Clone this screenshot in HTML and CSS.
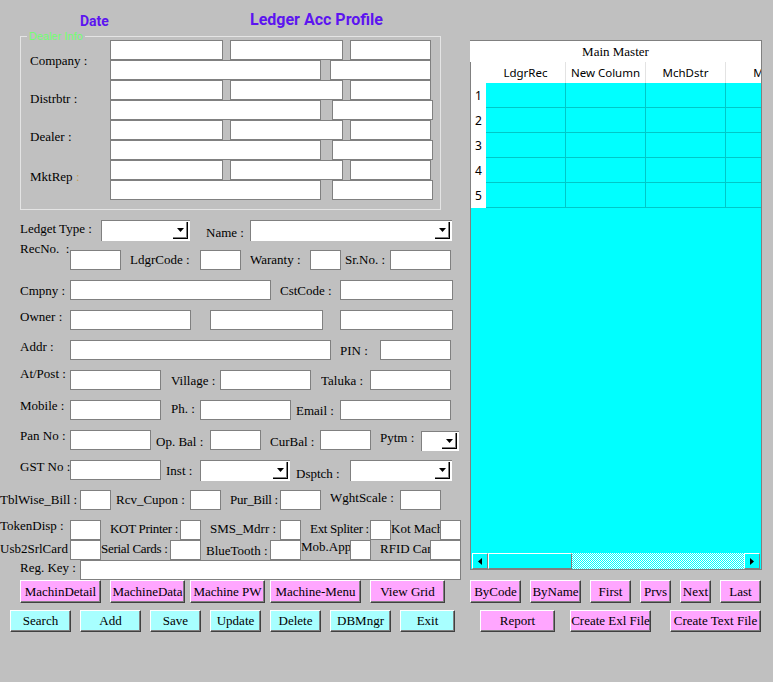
FILE: index.html
```html
<!DOCTYPE html>
<html>
<head>
<meta charset="utf-8">
<title>Ledger Acc Profile</title>
<link rel="stylesheet" href="styles.css">
</head>
<body>
<div class="top">
  <div class="left">
    <div class="hdr"><span class="date">Date</span><span class="ttl">Ledger Acc Profile</span></div>

    <div class="frame">
      <span class="legend">Dealer Info</span>
      <div class="grp">
        <span class="lb flb mt13">Company :</span>
        <div class="stack">
          <div class="line"><input class="tb w113"><input class="tb w113 ml7"><input class="tb w81 ml7"></div>
          <div class="line"><input class="tb w211"><input class="tb w101 ml9"></div>
        </div>
      </div>
      <div class="grp">
        <span class="lb flb mt11">Distrbtr :</span>
        <div class="stack">
          <div class="line"><input class="tb w113"><input class="tb w113 ml7"><input class="tb w81 ml7"></div>
          <div class="line"><input class="tb w211"><input class="tb w101 ml11"></div>
        </div>
      </div>
      <div class="grp">
        <span class="lb flb mt9">Dealer :</span>
        <div class="stack">
          <div class="line"><input class="tb w113"><input class="tb w113 ml7"><input class="tb w81 ml7"></div>
          <div class="line"><input class="tb w211"><input class="tb w101 ml11"></div>
        </div>
      </div>
      <div class="grp">
        <span class="lb flb mt9">MktRep <span class="colon">:</span></span>
        <div class="stack">
          <div class="line"><input class="tb w113"><input class="tb w113 ml7"><input class="tb w81 ml7"></div>
          <div class="line"><input class="tb w211"><input class="tb w101 ml11"></div>
        </div>
      </div>
    </div>

    <div class="row mt10">
      <span class="lb ml20 w81 mt1">Ledget Type :</span>
      <div class="combo w89"><span class="dd"><svg width="7" height="4" viewBox="0 0 7 4"><polygon points="0,0 7,0 3.5,4"/></svg></span></div>
      <span class="lb ml16 w44 mt5">Name :</span>
      <div class="combo w202"><span class="dd"><svg width="7" height="4" viewBox="0 0 7 4"><polygon points="0,0 7,0 3.5,4"/></svg></span></div>
    </div>

    <div class="row">
      <span class="lb ml20 w50 mtn9">RecNo.&nbsp; :</span>
      <input class="tb w51">
      <span class="lb ml9 w70 mt2">LdgrCode :</span>
      <input class="tb w41">
      <span class="lb ml9 w60 mt2">Waranty :</span>
      <input class="tb w31">
      <span class="lb ml4 w45 mt2">Sr.No. :</span>
      <input class="tb w61">
    </div>

    <div class="row">
      <span class="lb ml20 w50 mt3">Cmpny :</span>
      <input class="tb w201">
      <span class="lb ml9 w60 mt3">CstCode :</span>
      <input class="tb w113">
    </div>

    <div class="row">
      <span class="lb ml20 w50 mtn1">Owner :</span>
      <input class="tb w121">
      <input class="tb w113 ml19">
      <input class="tb w113 ml17">
    </div>

    <div class="row">
      <span class="lb ml20 w50 mtn1">Addr :</span>
      <input class="tb w261">
      <span class="lb ml9 w40 mt3">PIN :</span>
      <input class="tb w71">
    </div>

    <div class="row">
      <span class="lb ml20 w50 mtn4">At/Post :</span>
      <input class="tb w91">
      <span class="lb ml10 w49 mt3">Village :</span>
      <input class="tb w91">
      <span class="lb ml10 w49 mt3">Taluka :</span>
      <input class="tb w81">
    </div>

    <div class="row">
      <span class="lb ml20 w50 mtn2">Mobile :</span>
      <input class="tb w91">
      <span class="lb ml10 w29 mt1">Ph. :</span>
      <input class="tb w91">
      <span class="lb ml5 w44 mt3">Email :</span>
      <input class="tb w111">
    </div>

    <div class="row">
      <span class="lb ml20 w50 mtn2">Pan No :</span>
      <input class="tb w81">
      <span class="lb ml5 w54 mt4">Op. Bal :</span>
      <input class="tb w51">
      <span class="lb ml9 w50 mt4">CurBal :</span>
      <input class="tb w51">
      <span class="lb ml9 w41 mt0">Pytm :</span>
      <div class="combo w38 h20 mt1"><span class="dd dds"><svg width="7" height="4" viewBox="0 0 7 4"><polygon points="0,0 7,0 3.5,4"/></svg></span></div>
    </div>

    <div class="row">
      <span class="lb ml20 w50 mtn1">GST No :</span>
      <input class="tb w91">
      <span class="lb ml5 w34 mt3">Inst :</span>
      <div class="combo w90"><span class="dd"><svg width="7" height="4" viewBox="0 0 7 4"><polygon points="0,0 7,0 3.5,4"/></svg></span></div>
      <span class="lb ml6 w54 mt6">Dsptch :</span>
      <div class="combo w102"><span class="dd"><svg width="7" height="4" viewBox="0 0 7 4"><polygon points="0,0 7,0 3.5,4"/></svg></span></div>
    </div>

    <div class="row">
      <span class="lb w80 mt2">TblWise_Bill :</span>
      <input class="tb w31">
      <span class="lb ml5 w74 mt2">Rcv_Cupon :</span>
      <input class="tb w31">
      <span class="lb ml9 w50 mt2 tight">Pur_Bill :</span>
      <input class="tb w41">
      <span class="lb ml9 w70 mt0">WghtScale :</span>
      <input class="tb w41">
    </div>

    <div class="row h20">
      <span class="lb w70 mtn2">TokenDisp :</span>
      <input class="tb w31">
      <span class="lb ml9 w70 mt1 tight">KOT Printer :</span>
      <input class="tb w21">
      <span class="lb ml9 w70 mt1">SMS_Mdrr :</span>
      <input class="tb w21">
      <span class="lb ml9 w60 mt1 tight">Ext Spliter :</span>
      <input class="tb w21">
      <span class="lb w49 mt1">Kot Machine :</span>
      <input class="tb w21">
    </div>

    <div class="row h20">
      <span class="lb w70 mt1">Usb2SrlCard</span>
      <input class="tb w31">
      <span class="lb w69 mt1 tight">Serial Cards :</span>
      <input class="tb w31">
      <span class="lb ml5 w64 mt3">BlueTooth :</span>
      <input class="tb w31">
      <span class="lb w49 mtn1">Mob.App :</span>
      <input class="tb w21">
      <span class="lb ml9 w50 mt1">RFID Card :</span>
      <input class="tb w31">
    </div>

    <div class="row h20">
      <span class="lb ml20 w60 mt0">Reg. Key :</span>
      <input class="tb w381">
    </div>
  </div>

  <div class="grid">
    <div class="gtitle">Main Master</div>
    <div class="gbody">
      <div class="ghead">
        <span class="rn"></span>
        <span class="hc">LdgrRec</span>
        <span class="hc">New Column</span>
        <span class="hc">MchDstr</span>
        <span class="hc">Mob</span>
      </div>
      <div class="grow"><span class="rn">1</span><span class="cell"></span><span class="cell"></span><span class="cell"></span><span class="cell"></span></div>
      <div class="grow"><span class="rn">2</span><span class="cell"></span><span class="cell"></span><span class="cell"></span><span class="cell"></span></div>
      <div class="grow"><span class="rn">3</span><span class="cell"></span><span class="cell"></span><span class="cell"></span><span class="cell"></span></div>
      <div class="grow"><span class="rn">4</span><span class="cell"></span><span class="cell"></span><span class="cell"></span><span class="cell"></span></div>
      <div class="grow"><span class="rn">5</span><span class="cell"></span><span class="cell"></span><span class="cell"></span><span class="cell"></span></div>
      <div class="gfill"></div>
      <div class="hscroll">
        <span class="sbtn"><svg width="4" height="7" viewBox="0 0 4 7"><polygon points="4,0 4,7 0,3.5"/></svg></span>
        <span class="thumb"></span>
        <span class="track"></span>
        <span class="sbtn"><svg width="4" height="7" viewBox="0 0 4 7"><polygon points="0,0 0,7 4,3.5"/></svg></span>
      </div>
    </div>
  </div>
</div>

<div class="btnrow">
  <button class="btn pink ml20 w81">MachinDetail</button>
  <button class="btn pink ml9 w75">MachineData</button>
  <button class="btn pink ml5 w75">Machine PW</button>
  <button class="btn pink ml5 w91">Machine-Menu</button>
  <button class="btn pink ml9 w75">View Grid</button>
  <button class="btn pink ml25 w51">ByCode</button>
  <button class="btn pink ml9 w51">ByName</button>
  <button class="btn pink ml9 w41">First</button>
  <button class="btn pink ml9 w31">Prvs</button>
  <button class="btn pink ml9 w31">Next</button>
  <button class="btn pink ml9 w41">Last</button>
</div>
<div class="btnrow r2">
  <button class="btn cyan ml10 w61">Search</button>
  <button class="btn cyan ml9 w61">Add</button>
  <button class="btn cyan ml9 w51">Save</button>
  <button class="btn cyan ml9 w51">Update</button>
  <button class="btn cyan ml9 w51">Delete</button>
  <button class="btn cyan ml9 w61">DBMngr</button>
  <button class="btn cyan ml9 w55">Exit</button>
  <button class="btn pink ml25 w75">Report</button>
  <button class="btn pink ml15 w81">Create Exl File</button>
  <button class="btn pink ml19 w91">Create Text File</button>
</div>
</body>
</html>
```

FILE: styles.css
```css
body {
  margin: 0;
  width: 773px;
  height: 682px;
  overflow: hidden;
  background: #c0c0c0;
  color: #000;
  font-family: "Liberation Serif", "Times New Roman", serif;
  font-size: 13px;
}

.top {
  display: flex;
  align-items: flex-start;
  height: 580px;
}

.left {
  flex: none;
  width: 470px;
}

/* header */
.hdr {
  display: flex;
  align-items: flex-start;
  height: 36px;
  color: #5c14f0;
  font-family: Roboto, "Liberation Sans", sans-serif;
  font-weight: bold;
  line-height: 20px;
}
.date {
  margin-left: 80px;
  width: 170px;
  margin-top: 11px;
  font-size: 14px;
}
.ttl {
  margin-top: 10px;
  font-size: 16px;
}

/* dealer info frame */
.frame {
  position: relative;
  box-sizing: border-box;
  margin-left: 20px;
  width: 421px;
  height: 174px;
  border: 1px solid #e4e4e4;
  padding-top: 3px;
}
.legend {
  position: absolute;
  left: 6px;
  top: -7px;
  padding: 0 2px;
  background: #c0c0c0;
  color: #70ff70;
  font-family: "Liberation Sans", Arial, sans-serif;
  font-size: 11px;
  line-height: 12px;
}
.grp {
  display: flex;
  align-items: flex-start;
  height: 40px;
}
.flb {
  margin-left: 9px;
  width: 80px;
}
.stack {
  display: flex;
  flex-direction: column;
}
.line {
  display: flex;
}
.colon {
  color: #c8a050;
}

/* rows */
.row {
  display: flex;
  align-items: flex-start;
  height: 30px;
}
.row.h20 {
  height: 20px;
}

.lb {
  flex: none;
  display: block;
  line-height: 15px;
  white-space: nowrap;
  overflow: hidden;
}
.tight {
  letter-spacing: -0.3px;
}

.tb {
  flex: none;
  display: block;
  box-sizing: border-box;
  height: 20px;
  margin: 0;
  padding: 0;
  border: 1px solid #808080;
  border-radius: 0;
  background: #fff;
  font: inherit;
  outline: none;
}

.combo {
  flex: none;
  box-sizing: border-box;
  height: 21px;
  background: #fff;
  border-top: 1px solid #808080;
  border-left: 1px solid #808080;
  display: flex;
  justify-content: flex-end;
  align-items: flex-start;
  padding: 1px 2px 0 0;
}
.combo.h20 {
  height: 20px;
}
.dd {
  width: 15px;
  height: 17px;
  background: #fff;
  box-shadow: inset -1px -1px #000, inset -2px -2px #808080;
  display: flex;
  align-items: center;
  justify-content: center;
}
.dd svg {
  margin: -1px 0 0 -1px;
}
.dds {
  height: 16px;
}

/* grid */
.grid {
  flex: none;
  box-sizing: border-box;
  width: 292px;
  height: 530px;
  margin-top: 40px;
  border-top: 1px solid #808080;
  border-right: 1px solid #808080;
  display: flex;
  flex-direction: column;
  font-family: "Noto Sans", "Open Sans", sans-serif;
}
.gtitle {
  flex: none;
  height: 21px;
  line-height: 21px;
  background: #fff;
  text-align: center;
  font-family: "Liberation Serif", serif;
  font-size: 13px;
}
.gbody {
  flex: 1;
  display: flex;
  flex-direction: column;
  background: #00ffff;
  border-left: 1px solid #808080;
  border-bottom: 1px solid #808080;
  overflow: hidden;
}
.ghead {
  flex: none;
  display: flex;
  height: 21px;
  background: #fff;
}
.grow {
  flex: none;
  display: flex;
  height: 25px;
}
.rn {
  flex: none;
  box-sizing: border-box;
  width: 15px;
  padding-left: 4px;
  background: #fff;
  font-size: 12px;
  line-height: 25px;
}
.hc {
  flex: none;
  box-sizing: border-box;
  width: 80px;
  border-right: 1px solid #e3e3e3;
  text-align: center;
  white-space: nowrap;
  font-size: 11.5px;
  line-height: 21px;
}
.cell {
  flex: none;
  box-sizing: border-box;
  width: 80px;
  border-right: 1px solid #00c8c8;
  border-bottom: 1px solid #00c8c8;
}
.gfill {
  flex: 1;
}
.hscroll {
  flex: none;
  display: flex;
  height: 16px;
  margin: 0 1px 0 1px;
}
.sbtn, .thumb {
  flex: none;
  box-sizing: border-box;
  background: #00ffff;
  border: 1px solid;
  border-color: #fff #808080 #808080 #fff;
}
.sbtn {
  width: 16px;
  display: flex;
  align-items: center;
  justify-content: center;
}
.thumb {
  width: 84px;
}
.track {
  flex: 1;
  background: repeating-conic-gradient(#00ffff 0 25%, #ffffff 0 50%) 0 0 / 2px 2px;
}

/* buttons */
.btnrow {
  display: flex;
  height: 23px;
}
.btnrow.r2 {
  height: 22px;
  margin-top: 7px;
}
.btn {
  flex: none;
  box-sizing: border-box;
  height: 100%;
  margin: 0;
  padding: 0;
  font: inherit;
  color: #000;
  border: 1px solid;
  border-color: #fff #404040 #404040 #fff;
  border-radius: 0;
  box-shadow: inset -1px -1px #808080;
  text-align: center;
  white-space: nowrap;
  overflow: hidden;
}
.pink { background: #ffa6ff; }
.cyan { background: #a8ffff; }

/* spacing utilities */
.ml4 { margin-left: 4px; }
.ml5 { margin-left: 5px; }
.ml6 { margin-left: 6px; }
.ml7 { margin-left: 7px; }
.ml9 { margin-left: 9px; }
.ml10 { margin-left: 10px; }
.ml11 { margin-left: 11px; }
.ml15 { margin-left: 15px; }
.ml16 { margin-left: 16px; }
.ml17 { margin-left: 17px; }
.ml19 { margin-left: 19px; }
.ml20 { margin-left: 20px; }
.ml25 { margin-left: 25px; }

.mtn9 { margin-top: -9px; }
.mtn4 { margin-top: -4px; }
.mtn2 { margin-top: -2px; }
.mtn1 { margin-top: -1px; }
.mt0 { margin-top: 0; }
.mt1 { margin-top: 1px; }
.mt2 { margin-top: 2px; }
.mt3 { margin-top: 3px; }
.mt4 { margin-top: 4px; }
.mt5 { margin-top: 5px; }
.mt6 { margin-top: 6px; }
.mt9 { margin-top: 9px; }
.mt10 { margin-top: 10px; }
.mt11 { margin-top: 11px; }
.mt13 { margin-top: 13px; }

/* width utilities */
.w21 { width: 21px; }
.w29 { width: 29px; }
.w31 { width: 31px; }
.w34 { width: 34px; }
.w38 { width: 38px; }
.w40 { width: 40px; }
.w41 { width: 41px; }
.w44 { width: 44px; }
.w45 { width: 45px; }
.w49 { width: 49px; }
.w50 { width: 50px; }
.w51 { width: 51px; }
.w54 { width: 54px; }
.w55 { width: 55px; }
.w60 { width: 60px; }
.w61 { width: 61px; }
.w64 { width: 64px; }
.w69 { width: 69px; }
.w70 { width: 70px; }
.w71 { width: 71px; }
.w74 { width: 74px; }
.w75 { width: 75px; }
.w80 { width: 80px; }
.w81 { width: 81px; }
.w89 { width: 89px; }
.w90 { width: 90px; }
.w91 { width: 91px; }
.w101 { width: 101px; }
.w102 { width: 102px; }
.w111 { width: 111px; }
.w113 { width: 113px; }
.w121 { width: 121px; }
.w201 { width: 201px; }
.w202 { width: 202px; }
.w211 { width: 211px; }
.w261 { width: 261px; }
.w381 { width: 381px; }
```
